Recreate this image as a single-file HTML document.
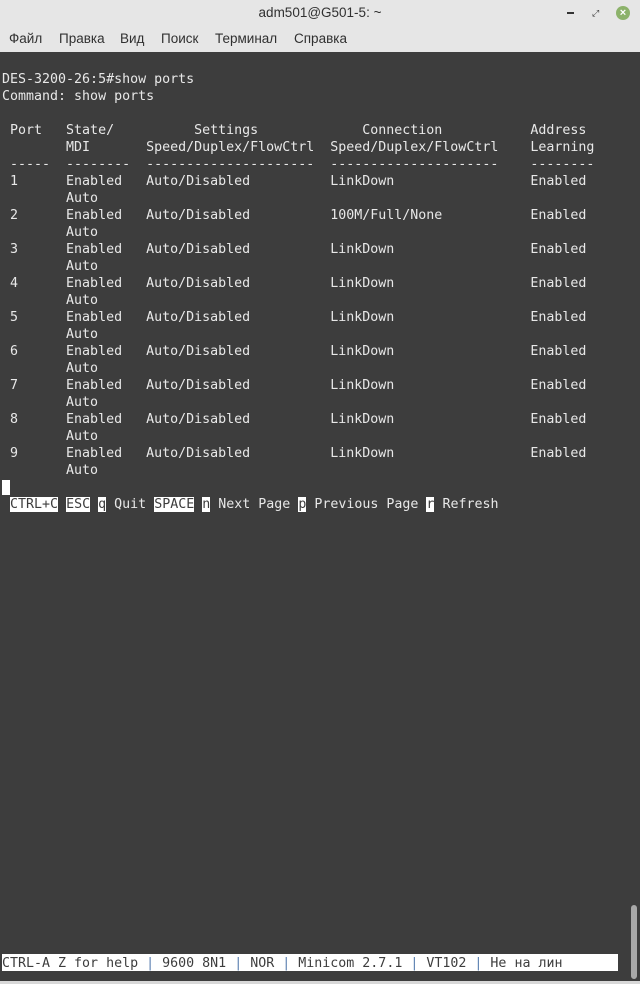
<!DOCTYPE html>
<html><head><meta charset="utf-8"><style>
*{margin:0;padding:0}
body{width:640px;height:984px;background:#3d3d3d;position:relative;overflow:hidden;font-family:"Liberation Sans","DejaVu Sans",sans-serif}
#title{position:absolute;left:0;top:0;width:640px;height:26px;background:#e6e6e6;text-align:center;font-size:13.5px;line-height:26px;color:#303030}
#menu{position:absolute;left:0;top:26px;width:640px;height:26px;background:#e6e6e6;font-size:13.5px;line-height:26px;color:#303030}
#menu span{position:absolute;top:0}
#term{position:absolute;left:2px;top:54px;font-family:"DejaVu Sans Mono",monospace;font-size:13.3px;line-height:17px;color:#e8e8e8;white-space:pre}
.h{background:#fff;color:#3d3d3d}
#status{position:absolute;left:2px;top:954px;width:616px;height:17px;background:#fff;font-family:"DejaVu Sans Mono",monospace;font-size:13.3px;line-height:19px;color:#3d3d3d;white-space:pre}
.s{color:#5a7fb0}
#sb{position:absolute;left:631px;top:905px;width:6px;height:74px;background:#a8a8a8;border-radius:3px}
#bot{position:absolute;left:0;top:981px;width:640px;height:3px;background:#d8d8d8}
</style></head><body>
<div id="title">adm501@G501-5: ~</div>
<div style="position:absolute;left:567px;top:12px;width:7px;height:2px;background:#333"></div>
<div style="position:absolute;left:592px;top:9px;font-size:9px;color:#333;line-height:9px">⤢</div>
<div style="position:absolute;left:616px;top:6px;width:14px;height:14px;border-radius:7px;background:#8cb26a;color:#fff;font-size:11px;line-height:14px;text-align:center;font-weight:bold">×</div>
<div id="menu"><span style="left:9px">Файл</span><span style="left:59px">Правка</span><span style="left:120px">Вид</span><span style="left:161px">Поиск</span><span style="left:215px">Терминал</span><span style="left:294px">Справка</span></div>
<div id="term">
DES-3200-26:5#show ports
Command: show ports

 Port   State/          Settings             Connection           Address
        MDI       Speed/Duplex/FlowCtrl  Speed/Duplex/FlowCtrl    Learning
 -----  --------  ---------------------  ---------------------    --------
 1      Enabled   Auto/Disabled          LinkDown                 Enabled
        Auto
 2      Enabled   Auto/Disabled          100M/Full/None           Enabled
        Auto
 3      Enabled   Auto/Disabled          LinkDown                 Enabled
        Auto
 4      Enabled   Auto/Disabled          LinkDown                 Enabled
        Auto
 5      Enabled   Auto/Disabled          LinkDown                 Enabled
        Auto
 6      Enabled   Auto/Disabled          LinkDown                 Enabled
        Auto
 7      Enabled   Auto/Disabled          LinkDown                 Enabled
        Auto
 8      Enabled   Auto/Disabled          LinkDown                 Enabled
        Auto
 9      Enabled   Auto/Disabled          LinkDown                 Enabled
        Auto
<span class="h"> </span>
 <span class="h">CTRL+C</span> <span class="h">ESC</span> <span class="h">q</span> Quit <span class="h">SPACE</span> <span class="h">n</span> Next Page <span class="h">p</span> Previous Page <span class="h">r</span> Refresh</div>
<div id="status">CTRL-A Z for help <span class="s">|</span> 9600 8N1 <span class="s">|</span> NOR <span class="s">|</span> Minicom 2.7.1 <span class="s">|</span> VT102 <span class="s">|</span> Не на лин</div>
<div id="sb"></div>
<div id="bot"></div>
</body></html>
